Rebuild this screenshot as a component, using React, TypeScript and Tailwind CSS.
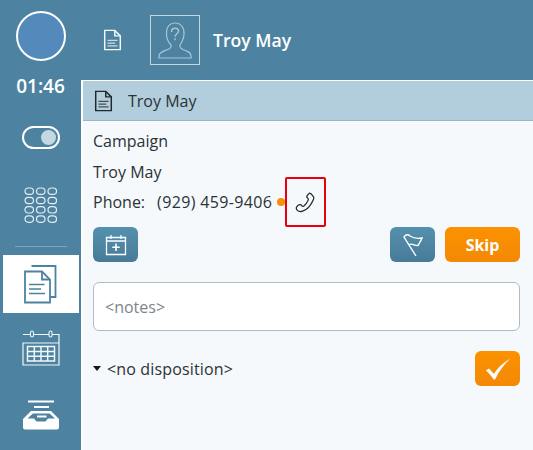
function DocIcon({ className, stroke }: { className: string; stroke: string }) {
  return (
    <svg viewBox="0 0 20 24" fill="none" stroke={stroke} className={className}>
      <path d="M1.5 1.5H12.5L18.5 7.5V22.5H1.5Z" strokeWidth="1.6" />
      <path d="M12.5 1.5V7.5H18.5" strokeWidth="1.6" />
      <path d="M4.5 12.5H15.5M4.5 15.5H13M4.5 18.5H15.5" strokeWidth="1.3" opacity="0.75" />
    </svg>
  );
}

function Keypad() {
  return (
    <svg viewBox="0 0 33 36" width="33" height="36" fill="none" stroke="#e3edf2" strokeWidth="1.2" className="block">
      {[0, 1, 2, 3].map((row) =>
        [0, 1, 2].map((col) => (
          <rect key={`${row}-${col}`} x={1 + col * 11.5} y={1 + row * 9.3} width="8.5" height="6.4" rx="3.2" />
        )),
      )}
    </svg>
  );
}

function PagesIcon() {
  return (
    <svg viewBox="0 0 33 39" width="33" height="39" fill="none" stroke="#4d83a0" strokeWidth="1.8" className="block">
      <path d="M7.5 1H31.5V32H26" />
      <path d="M1 6.5H18L26 14.5V37.5H1Z" fill="#fff" />
      <path d="M18 6.5V14.5H26" />
      <path d="M5 19.5H20.5M5 24H17M5 28.5H21" strokeWidth="1.6" />
    </svg>
  );
}

function CalendarIcon() {
  return (
    <svg viewBox="0 0 38 36" width="38" height="36" fill="none" stroke="#f1f6f8" className="block">
      <path d="M1 4.5H37V35H1V13H37" strokeWidth="1.2" />
      <rect x="8.5" y="1" width="3" height="6" rx="1.5" fill="#4d83a0" strokeWidth="1.1" />
      <rect x="27" y="1" width="3" height="6" rx="1.5" fill="#4d83a0" strokeWidth="1.1" />
      <path d="M5.5 16.5H32.5V31H5.5Z M5.5 21.5H32.5M5.5 26.3H32.5M12.3 16.5V31M19 16.5V31M25.7 16.5V31" strokeWidth="1.5" />
    </svg>
  );
}

function InboxIcon() {
  return (
    <svg viewBox="0 0 38 30" width="38" height="30" className="block">
      <path d="M6 0.5H32V2.5H6Z M12 6H27V8H12Z" fill="#fff" />
      <path d="M9 11H29L37 19V27.5Q37 29.5 35 29.5H3Q1 29.5 1 27.5V19Z" fill="#fff" />
      <path d="M5.5 18.5L11 13.5H27.5L33 18.5H26L23.5 21.5H14.5L12 18.5Z" fill="#4d83a0" />
      <path d="M15 15.5H24.5V17.5H15Z" fill="#fff" />
    </svg>
  );
}

function PersonIcon() {
  return (
    <svg viewBox="0 0 34 37" width="34" height="37" fill="none" stroke="#a9c6d5" strokeWidth="1.2" className="block">
      <path d="M1 36V34C1 30 6 29 10 27.5C12.5 26.5 13.5 25 13 23C10 20 8.5 16 8.5 12C8 6 11 1 17 1C23 1 26.5 6 26 12C26 16 24 20 22 23C21.5 25 22.5 26.5 25 27.5C29 29 33 30 33 34V36Z" />
      <path d="M13.5 10C13.5 7.5 15 6.3 17 6.3C19 6.3 20.5 7.5 20.5 9.3C20.5 11.8 17 11.8 17 14.8" strokeWidth="1.5" />
      <path d="M17 16.3V18.3" strokeWidth="1.5" />
    </svg>
  );
}

export default function App() {
  return (
    <div className="flex h-[450px] w-[533px] overflow-hidden bg-[#4d83a0] font-['Open_Sans','Noto_Sans',sans-serif] text-[#2b3238]">
      <aside className="flex w-[81px] shrink-0 flex-col items-center">
        <div className="mt-[11px] h-[50px] w-[50px] rounded-full border-2 border-white bg-[#5489bb]" />
        <div className="mt-[13px] text-[19px] leading-[24px] font-semibold text-white">01:46</div>
        <div className="mt-[28px] flex h-[23px] w-[38px] items-center justify-end rounded-full border-2 border-white pr-[2px]">
          <div className="h-[15px] w-[15px] rounded-full bg-[#c5d8e1]" />
        </div>
        <div className="mt-[38px]">
          <Keypad />
        </div>
        <div className="mt-[23px] h-px w-[52px] bg-[#7ba5bb]" />
        <div className="mt-[8px] flex h-[58px] w-[76px] items-center justify-center bg-white">
          <PagesIcon />
        </div>
        <div className="mt-[17px]">
          <CalendarIcon />
        </div>
        <div className="mt-[34px]">
          <InboxIcon />
        </div>
      </aside>

      <div className="flex min-w-0 flex-1 flex-col">
        <header className="flex h-[80px] shrink-0 items-center text-white">
          <DocIcon className="ml-[22px] h-[22px] w-[19px]" stroke="#f3f7f9" />
          <div className="ml-[28px] flex h-[50px] w-[50px] items-center justify-center border border-[#c3d7e1]">
            <PersonIcon />
          </div>
          <span className="ml-[13px] text-[17.6px] font-semibold">Troy May</span>
        </header>

        <main className="flex-1 border-t border-l-2 border-white bg-[#f5f9fb]">
          <div className="flex h-[40px] items-center border-b border-[#9eb6c3] bg-[#b2cddb] pl-[11px]">
            <DocIcon className="h-[22px] w-[19px]" stroke="#20282d" />
            <span className="ml-[15px] text-[16px]">Troy May</span>
          </div>

          <div className="pt-[9px] pr-[13px] pl-[10px] text-[16px]">
            <div className="leading-[22px]">Campaign</div>
            <div className="mt-[9px] leading-[22px]">Troy May</div>
            <div className="mt-[-6px] flex h-[50px] items-center">
              <span>Phone:</span>
              <span className="ml-[12px] tracking-[0.35px]">(929) 459-9406</span>
              <span className="ml-[5px] h-[8px] w-[8px] rounded-full bg-[#f78f0a]" />
              <button type="button" className="flex h-[50px] w-[41px] items-center justify-center rounded-[2px] border-2 border-[#e8000f]">
                <svg viewBox="0 0 22 22" width="21" height="21" fill="none" stroke="#23282c" strokeWidth="1.3">
                  <path d="M14.5 1.8C15.2 1 16.3 1.2 17.2 2.2L19.4 5C20 5.8 19.8 6.6 19.2 8C17.5 12 13.5 18 8 20C6 20.7 4 20.6 2.8 19.5C1.3 18.2 1 16.8 1.8 15.5C2.6 14.3 3.8 13.5 5 13.3C6 13.2 6.7 13.6 7.3 14.5C7.8 15.2 8.5 15.3 9.3 14.7C11.3 13 13 10.5 13.8 8.5C14.1 7.5 14 7 13.2 6.4C12.3 5.7 12.2 4.6 12.8 3.8Z" />
                </svg>
              </button>
            </div>

            <div className="flex items-center">
              <button type="button" className="flex h-[35px] w-[45px] items-center justify-center rounded-[6px] bg-gradient-to-b from-[#5491ae] to-[#477b98]">
                <svg viewBox="0 0 22 22" width="22" height="22" fill="none" stroke="#fff" strokeWidth="1.3">
                  <path d="M1.5 3.5H20.5V20.5H1.5Z" />
                  <path d="M6 1V5M16 1V5M1.5 7H20.5" />
                  <path d="M11 9.5V17M7.3 13.2H14.7" strokeWidth="1.6" />
                </svg>
              </button>
              <button type="button" className="ml-auto flex h-[35px] w-[45px] items-center justify-center rounded-[6px] bg-gradient-to-b from-[#5491ae] to-[#477b98]">
                <svg viewBox="0 0 20 24" width="20" height="24" fill="none" stroke="#fff" strokeWidth="1.4">
                  <path d="M13 23L1 4C3 1.5 5 1 7 3C10 5 13 6 19 5C18 8 16.5 10 15 12.5C12 13 9 10 6.5 11.5" />
                </svg>
              </button>
              <button type="button" className="ml-[10px] h-[35px] w-[75px] rounded-[6px] bg-gradient-to-b from-[#fb9200] to-[#f48806] text-[16px] font-bold text-white">
                Skip
              </button>
            </div>

            <div className="mt-[20px] flex h-[49px] items-center rounded-[6px] border border-[#b0bcc3] bg-white pl-[11px] text-[#7e858a]">
              &lt;notes&gt;
            </div>

            <div className="mt-[20px] flex items-center">
              <span className="h-0 w-0 border-x-[4.5px] border-t-[5px] border-x-transparent border-t-[#14181b]" />
              <span className="ml-[6px] tracking-[0.15px]">&lt;no disposition&gt;</span>
              <button type="button" className="ml-auto flex h-[35px] w-[45px] items-center justify-center rounded-[6px] bg-gradient-to-b from-[#fb9200] to-[#f48806]">
                <svg viewBox="0 0 26 22" width="26" height="22" fill="#fff">
                  <path d="M1 12.5L4 10.5L9 16C12.5 10 17.5 5 25 1C19 6.5 14 13 10 21.5H8.5C6.5 18 4 15 1 12.5Z" />
                </svg>
              </button>
            </div>
          </div>
        </main>
      </div>
    </div>
  );
}
